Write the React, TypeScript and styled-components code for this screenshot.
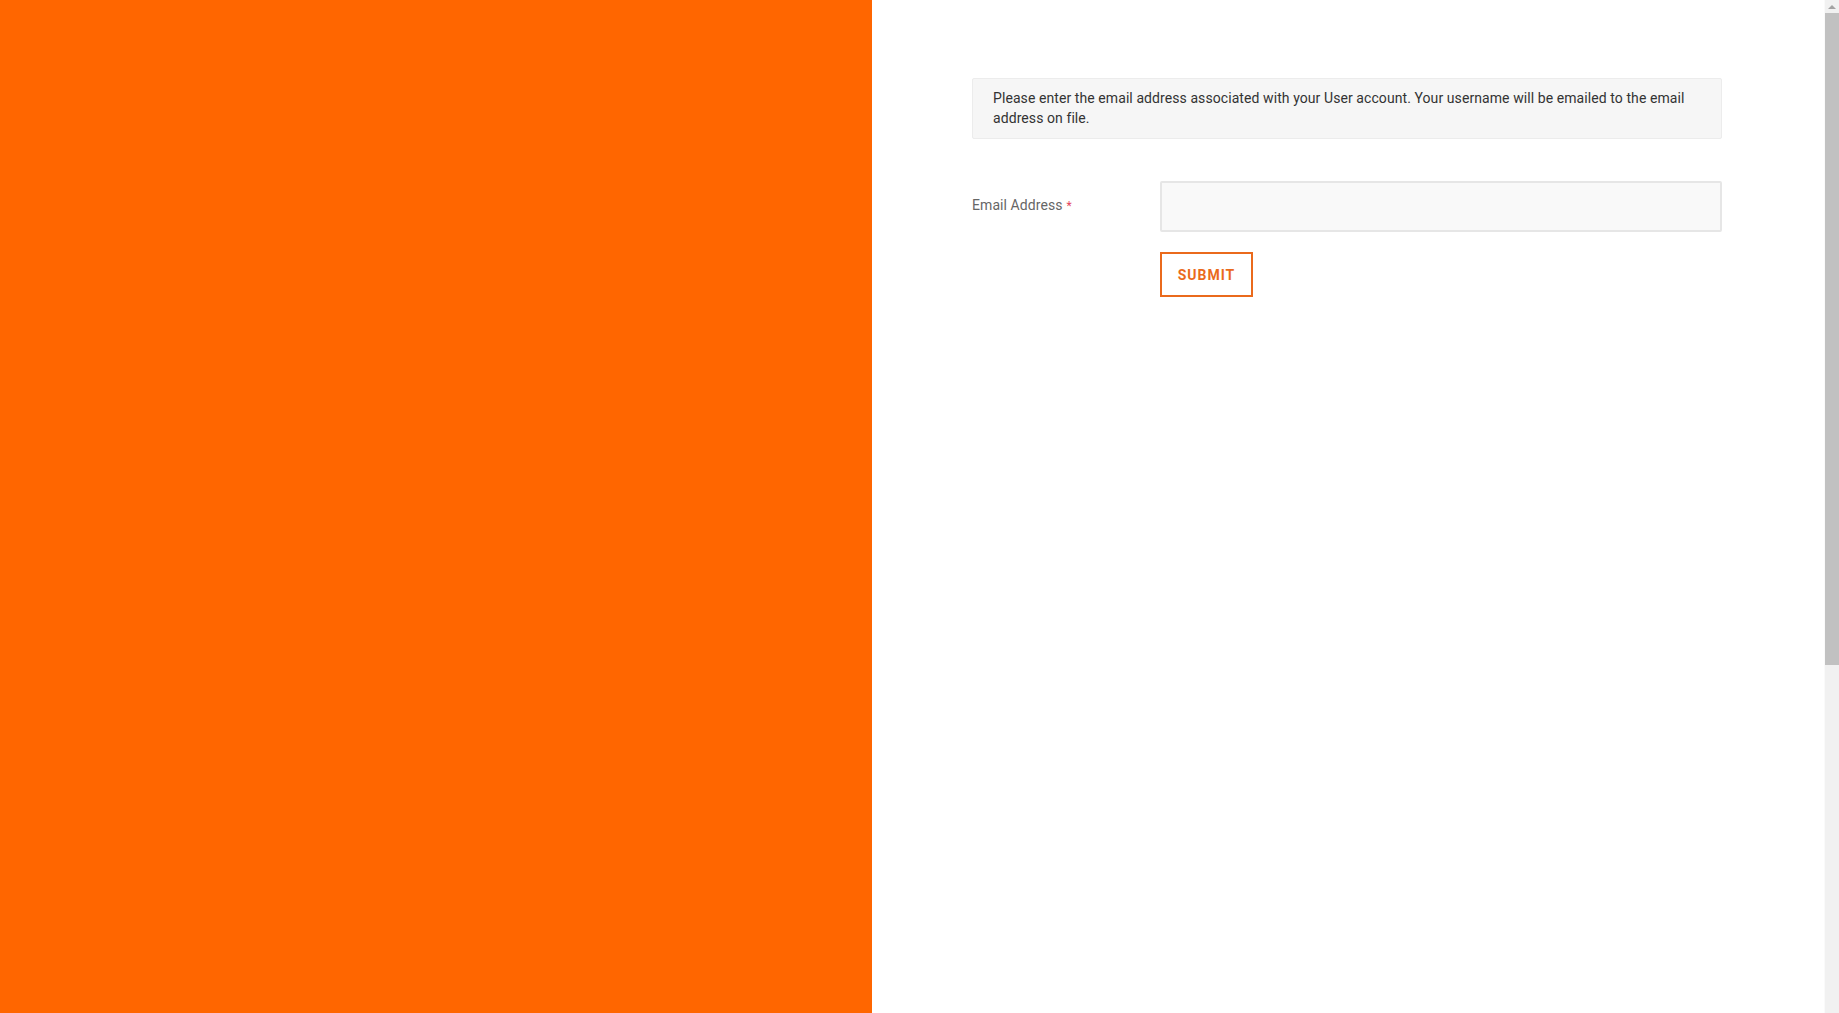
import React, { FC } from 'react';
import styled, { createGlobalStyle } from 'styled-components';

const GlobalStyle = createGlobalStyle`
  html, body {
    margin: 0;
    padding: 0;
    overflow: hidden;
  }

  body {
    font-family: Roboto, 'Liberation Sans', sans-serif;
    color: #333;
    background: #fff;
  }

  * {
    box-sizing: border-box;
  }
`;

const Page = styled.div`
  display: grid;
  grid-template-columns: 872px 1fr 15px;
  height: 100vh;
`;

const Brand = styled.aside`
  background: #ff6600;
`;

const Content = styled.main`
  padding: 78px 102px 40px 100px;
`;

const Notice = styled.div`
  background: #f6f6f6;
  border: 1px solid #ececec;
  border-radius: 2px;
  padding: 9px 20px 10px 20px;
  font-size: 14px;
  line-height: 20px;
  letter-spacing: 0.08px;
  color: #333;
`;

const Form = styled.form`
  margin-top: 42px;
  display: grid;
  grid-template-columns: 188px 1fr;
  row-gap: 20px;
`;

const Label = styled.label`
  font-size: 14px;
  letter-spacing: 0.08px;
  color: #666;
  padding-top: 16px;
`;

const Required = styled.span`
  color: #e4455d;
  margin-left: 4px;
  font-size: 12px;
`;

const Input = styled.input`
  height: 51px;
  width: 100%;
  background: #f9f9f9;
  border: 2px solid #e6e6e6;
  border-radius: 2px;
  padding: 0 14px;
  font-family: inherit;
  font-size: 14px;
  outline: none;
`;

const Actions = styled.div`
  grid-column: 2;
`;

const SubmitButton = styled.button`
  height: 45px;
  width: 93px;
  background: #fff;
  border: 2px solid #ea6a1c;
  border-radius: 0;
  color: #ea6a1c;
  font-family: inherit;
  font-size: 14px;
  font-weight: 700;
  letter-spacing: 1px;
  text-transform: uppercase;
  cursor: pointer;
`;

/* window scrollbar: up arrow, thumb, then the empty track */
const Scrollbar = styled.div`
  display: flex;
  flex-direction: column;
  background: #f1f1f1;
  border-left: 1px solid #fafafa;
`;

const ScrollArrow = styled.div`
  height: 13px;
  display: flex;
  align-items: center;
  justify-content: center;

  &::before {
    content: '';
    border-left: 4px solid transparent;
    border-right: 4px solid transparent;
    border-bottom: 4px solid #a3a3a3;
  }
`;

const ScrollThumb = styled.div`
  height: 652px;
  background: #c1c1c1;
`;

const App: FC = () => (
  <>
    <GlobalStyle />
    <Page>
      <Brand />
      <Content>
        <Notice>
          Please enter the email address associated with your User account. Your username will be
          emailed to the email address on file.
        </Notice>
        <Form onSubmit={(e) => e.preventDefault()}>
          <Label htmlFor="email">
            Email Address<Required>*</Required>
          </Label>
          <Input id="email" type="email" />
          <Actions>
            <SubmitButton type="submit">Submit</SubmitButton>
          </Actions>
        </Form>
      </Content>
      <Scrollbar>
        <ScrollArrow />
        <ScrollThumb />
      </Scrollbar>
    </Page>
  </>
);

export default App;
